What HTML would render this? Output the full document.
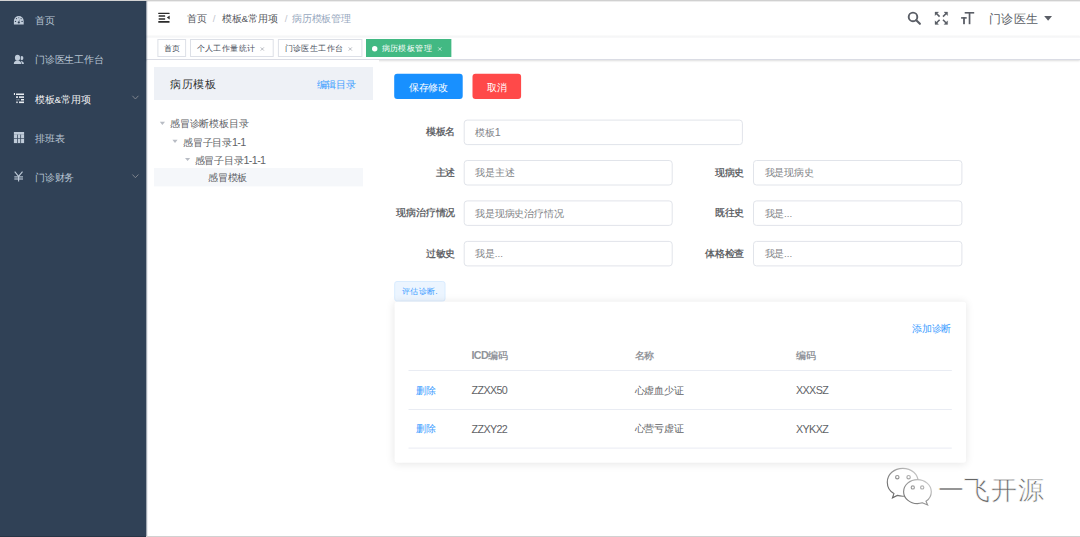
<!DOCTYPE html>
<html><head><meta charset="utf-8">
<style>
*{margin:0;padding:0;box-sizing:border-box}
html,body{width:1080px;height:537px;overflow:hidden;background:#fff;font-family:"Liberation Sans",sans-serif;position:relative}
.a{position:absolute;white-space:nowrap}
#topline{left:0;top:0;width:10800px;height:10px;background:#d3d3d3}
#botline{left:0;top:5360px;width:10800px;height:10px;background:rgba(0,0,0,.18)}
#side{left:0;top:10px;width:1460px;height:5360px;background:#304156}
.mi{left:350px;font-size:98px;color:#b9c5d3;line-height:120px}
.mic{left:140px}
.arr{left:1320px}
#nav{left:1460px;top:10px;width:9340px;height:350px;background:#fff;box-shadow:0 10px 30px rgba(0,21,41,.08)}
.bc{font-size:98px;line-height:120px;top:126px}
#tags{left:1460px;top:360px;width:9340px;height:240px;background:#fff;border-bottom:10px solid #dadce4;box-shadow:0 10px 20px 0 rgba(0,0,0,.12),0 0 20px 0 rgba(0,0,0,.04)}
.tg{top:390px;height:180px;border:10px solid #dde0e7;background:#fff;color:#495060;font-size:84px;line-height:160px;padding:0 0 0 56px}
.tg .x{display:inline-block;width:112px;text-align:center;font-size:60px;margin-left:20px;color:#8a8f99;vertical-align:top}
.tg.act{background:#42b983;border-color:#42b983;color:#fff}
.tg.act .x{color:#fff}
.dot{display:inline-block;width:56px;height:56px;border-radius:50%;background:#fff;margin-right:20px;vertical-align:0px}
#lph{left:1540px;top:670px;width:2190px;height:330px;background:#eef1f6}
.tn{font-size:98px;color:#606266;line-height:120px}
.car{width:0;height:0;border-left:27px solid transparent;border-right:27px solid transparent;border-top:34px solid #c0c4cc}
.btn{height:252px;border-radius:30px;color:#fff;font-size:98px;line-height:266px;text-align:center;top:738px}
.lbl{font-size:98px;font-weight:700;color:#606266;line-height:120px;text-align:right}
.inp{border:10px solid #e1e4ea;border-radius:35px;height:255px;background:#fff;font-size:98px;color:#818387;line-height:235px;padding-left:105px}
#etag{left:3942px;top:2810px;width:513px;height:206px;background:#ecf5ff;border:10px solid #d9ecff;border-radius:28px;color:#409eff;font-size:84px;line-height:186px;padding-left:65px}
#card{left:3947px;top:3018px;width:5713px;height:1608px;background:#fff;border-radius:28px;box-shadow:0 10px 80px 0 rgba(0,0,0,.1)}
.th{font-size:98px;color:#909399;font-weight:bold;line-height:120px;top:3496px}
.td{font-size:98px;color:#606266;line-height:120px}
.hl{left:4085px;width:5433px;height:10px;background:#e9ecf3}
.blue{color:#409eff}
.lt{font-size:1.1em;letter-spacing:-0.06em}
#wm{left:9375px;top:4752px;font-size:265px;color:#666;line-height:300px;letter-spacing:3px;-webkit-text-stroke:6px #fff}
#root{position:absolute;left:0;top:0;width:10800px;height:5370px;transform:scale(0.1);transform-origin:0 0}
</style></head><body><div id="root">
<div id="topline" class="a"></div>
<div id="side" class="a"></div>

<!-- sidebar items -->
<div class="a mi" style="top:144px">首页</div>
<div class="a mi" style="top:537px">门诊医生工作台</div>
<div class="a mi" style="top:931px;color:#f4f4f5">模板&amp;常用项</div>
<div class="a mi" style="top:1321px">排班表</div>
<div class="a mi" style="top:1714px">门诊财务</div>

<div id="nav" class="a"></div>
<div id="tags" class="a"></div>
<div class="a" style="left:1460px;top:362px;width:9340px;height:22px;background:linear-gradient(rgba(0,21,41,.05),rgba(0,21,41,.035) 50%,rgba(0,21,41,0))"></div>

<!-- breadcrumb -->
<div class="a bc" style="left:1870px;color:#55575c">首页</div>
<div class="a bc" style="left:2127px;color:#c0c4cc">/</div>
<div class="a bc" style="left:2220px;color:#55575c">模板&amp;常用项</div>
<div class="a bc" style="left:2847px;color:#c0c4cc">/</div>
<div class="a bc" style="left:2920px;color:#97a8be">病历模板管理</div>

<div class="a" style="left:9888px;top:107px;font-size:125px;line-height:150px;color:#5a5e66">门诊医生</div>

<!-- tags -->
<div class="a tg" style="left:1574px;width:287px">首页</div>
<div class="a tg" style="left:1900px;width:837px">个人工作量统计</div>
<div class="a tg" style="left:2779px;width:845px">门诊医生工作台</div>
<div class="a tg act" style="left:3660px;width:852px;padding-left:146px">病历模板管理</div>
<div class="a" style="left:3720px;top:460px;width:54px;height:54px;border-radius:50%;background:#fff"></div>
<div class="a" style="left:1470px;top:600px;width:2320px;height:40px;background:#fff"></div>
<!-- left panel -->
<div id="lph" class="a"></div>
<div class="a" style="left:1700px;top:770px;font-size:115px;line-height:140px;color:#303133">病历模板</div>
<div class="a blue" style="left:3165px;top:790px;font-size:98px;line-height:120px">编辑目录</div>

<div class="a tn" style="left:1700px;top:1180px">感冒诊断模板目录</div>
<div class="a tn" style="left:1830px;top:1360px">感冒子目录<span class="lt">1-1</span></div>
<div class="a tn" style="left:1945px;top:1540px">感冒子目录<span class="lt">1-1-1</span></div>
<div class="a" style="left:1540px;top:1680px;width:2090px;height:184px;background:#f5f7fa"></div>
<div class="a tn" style="left:2080px;top:1720px">感冒模板</div>

<!-- buttons -->
<div class="a btn" style="left:3942px;width:685px;background:#1890ff">保存修改</div>
<div class="a btn" style="left:4725px;width:486px;background:#ff4949">取消</div>

<!-- form -->
<div class="a lbl" style="left:3800px;width:752px;top:1260px">模板名</div>
<div class="a inp" style="left:4637px;top:1196px;width:2792px">模板<span class="lt">1</span></div>

<div class="a lbl" style="left:3800px;width:752px;top:1665px">主述</div>
<div class="a inp" style="left:4637px;top:1600px;width:2090px">我是主述</div>
<div class="a lbl" style="left:6700px;width:742px;top:1665px">现病史</div>
<div class="a inp" style="left:7530px;top:1600px;width:2094px">我是现病史</div>

<div class="a lbl" style="left:3800px;width:752px;top:2070px">现病治疗情况</div>
<div class="a inp" style="left:4637px;top:2004px;width:2090px">我是现病史治疗情况</div>
<div class="a lbl" style="left:6700px;width:742px;top:2070px">既往史</div>
<div class="a inp" style="left:7530px;top:2004px;width:2094px">我是...</div>

<div class="a lbl" style="left:3800px;width:752px;top:2475px">过敏史</div>
<div class="a inp" style="left:4637px;top:2409px;width:2090px">我是...</div>
<div class="a lbl" style="left:6700px;width:742px;top:2475px">体格检查</div>
<div class="a inp" style="left:7530px;top:2409px;width:2094px">我是...</div>

<div id="etag" class="a">评估诊断.</div>
<div id="card" class="a"></div>
<div class="a blue" style="left:9120px;top:3230px;font-size:98px;line-height:120px">添加诊断</div>
<div class="a th" style="left:4715px"><span class="lt">ICD</span>编码</div>
<div class="a th" style="left:6345px">名称</div>
<div class="a th" style="left:7960px">编码</div>
<div class="a hl" style="top:3700px"></div>
<div class="a td blue" style="left:4160px;top:3845px">删除</div>
<div class="a td" style="left:4715px;top:3845px"><span class="lt">ZZXX50</span></div>
<div class="a td" style="left:6345px;top:3845px">心虚血少证</div>
<div class="a td" style="left:7960px;top:3845px"><span class="lt">XXXSZ</span></div>
<div class="a hl" style="top:4090px"></div>
<div class="a td blue" style="left:4160px;top:4230px">删除</div>
<div class="a td" style="left:4715px;top:4230px"><span class="lt">ZZXY22</span></div>
<div class="a td" style="left:6345px;top:4230px">心营亏虚证</div>
<div class="a td" style="left:7960px;top:4230px"><span class="lt">XYKXZ</span></div>
<div class="a hl" style="top:4476px"></div>

<div id="wm" class="a">一飞开源</div>

<svg class="a" style="left:0;top:0" width="10800" height="5370" viewBox="0 0 1080 537">
<!-- hamburger -->
<g fill="#2b2b2b">
<rect x="158.2" y="12.7" width="11.4" height="1.4" rx="0.4"/>
<rect x="158.6" y="15.3" width="6.6" height="1.5" rx="0.4"/>
<rect x="158.6" y="18.2" width="6.6" height="1.5" rx="0.4"/>
<rect x="158.2" y="21" width="11.4" height="1.7" rx="0.4"/>
<path d="M169.7 15.4 L169.7 19.4 L166.8 17.4z"/>
</g>
<!-- search -->
<circle cx="913" cy="16.9" r="4.3" stroke="#5a5e66" stroke-width="1.9" fill="none"/>
<line x1="916.3" y1="20.2" x2="919.9" y2="23.8" stroke="#5a5e66" stroke-width="2.1" stroke-linecap="round"/>
<!-- fullscreen -->
<g fill="#5a5e66" stroke="#5a5e66">
<path d="M935 12 h3.6 l-3.6 3.6z" stroke-width="0.3"/><line x1="936.2" y1="13.2" x2="939.6" y2="16.6" stroke-width="1.6"/>
<path d="M947.6 12 h-3.6 l3.6 3.6z" stroke-width="0.3"/><line x1="946.4" y1="13.2" x2="943" y2="16.6" stroke-width="1.6"/>
<path d="M935 24.4 h3.6 l-3.6 -3.6z" stroke-width="0.3"/><line x1="936.2" y1="23.2" x2="939.6" y2="19.8" stroke-width="1.6"/>
<path d="M947.6 24.4 h-3.6 l3.6 -3.6z" stroke-width="0.3"/><line x1="946.4" y1="23.2" x2="943" y2="19.8" stroke-width="1.6"/>
</g>
<!-- size tT -->
<g fill="#5a5e66">
<rect x="964.7" y="12" width="9.5" height="1.6"/><rect x="968.7" y="12" width="1.7" height="12.2"/>
<rect x="961.1" y="17.1" width="5.6" height="1.6"/><rect x="963.1" y="17.1" width="1.8" height="7.1"/>
</g>
<!-- caret -->
<path d="M1044.2 16 L1052 16 L1048.1 20.8z" fill="#5a5e66"/>
<!-- sidebar icons -->
<g fill="#bfcbd9">
<path d="M13.9 24.5 V20.9 A4.9 4.9 0 0 1 23.7 20.9 V24.5z"/>
</g>
<g fill="#304156">
<circle cx="15.5" cy="21.4" r="0.7"/><circle cx="22.1" cy="21.4" r="0.7"/>
<circle cx="16.5" cy="18.6" r="0.6"/><circle cx="21.1" cy="18.6" r="0.6"/><circle cx="18.8" cy="17.7" r="0.5"/>
<circle cx="18.8" cy="22.5" r="1.1"/><path d="M18.4 22.3 L19.4 19 L19.2 22.5z"/>
</g>
<g fill="#bfcbd9">
<ellipse cx="21.8" cy="58.1" rx="1.6" ry="2.1"/>
<path d="M20.6 60.9 Q23.9 61.2 23.9 63.9 L21.2 63.9z"/>
</g>
<g fill="#304156" stroke="#304156" stroke-width="1.1">
<ellipse cx="17.5" cy="57.7" rx="2.6" ry="3"/>
<path d="M13.8 64.1 Q13.8 60.5 17.5 60.5 Q21.2 60.5 21.2 64.1z"/>
</g>
<g fill="#bfcbd9">
<ellipse cx="17.5" cy="57.7" rx="2.6" ry="3"/>
<path d="M13.8 64.1 Q13.8 60.5 17.5 60.5 Q21.2 60.5 21.2 64.1z"/>
</g>
<g fill="#e9edf2">
<rect x="13.9" y="93" width="1.1" height="2"/>
<rect x="16" y="93.5" width="8" height="1.5"/>
<rect x="16" y="96.3" width="2" height="1.6"/><rect x="19" y="96.3" width="5" height="1.6"/>
<rect x="16.5" y="99" width="1" height="1.5" opacity=".5"/><rect x="18.3" y="99" width="1" height="1.5" opacity=".5"/><rect x="21" y="99" width="3" height="1.5"/>
<rect x="16" y="101.5" width="2" height="1.6" opacity=".7"/><rect x="19" y="101.5" width="5" height="1.6"/>
</g>
<g fill="#bfcbd9">
<rect x="13.9" y="132" width="10.2" height="11.1"/>
</g>
<g fill="#304156" opacity=".9">
<rect x="17.05" y="134.6" width="0.8" height="8.6"/><rect x="20.25" y="134.6" width="0.8" height="8.6"/>
<rect x="13.9" y="138" width="10.2" height="0.7"/>
<rect x="13.9" y="134.2" width="10.2" height="0.35" opacity=".5"/>
</g>
<g stroke="#bfcbd9" stroke-width="1.1" fill="none">
<polyline points="14.7,171.7 18.6,176.4 22.5,171.7"/>
<line x1="18.6" y1="176.4" x2="18.6" y2="181.6"/>
<line x1="14.3" y1="176.9" x2="23" y2="176.9"/>
<line x1="14.3" y1="179" x2="23" y2="179"/>
</g>
<!-- submenu arrows -->
<polyline points="132.4,95.8 135.4,99 138.4,95.8" stroke="#909399" stroke-width="0.8" fill="none"/>
<polyline points="132.4,174.5 135.4,177.7 138.4,174.5" stroke="#909399" stroke-width="0.8" fill="none"/>
<!-- tag close -->
<g stroke="#9a9ea6" stroke-width="0.7">
<path d="M260.7 47.4 L263.9 50.6 M263.9 47.4 L260.7 50.6"/>
<path d="M348.7 47.4 L351.9 50.6 M351.9 47.4 L348.7 50.6"/>
</g>
<path d="M438.2 47.4 L441.4 50.6 M441.4 47.4 L438.2 50.6" stroke="#e8f6ef" stroke-width="0.7"/>
<!-- wechat -->
<defs><linearGradient id="wg" gradientUnits="userSpaceOnUse" x1="890" y1="505" x2="925" y2="467"><stop offset="0" stop-color="#555"/><stop offset=".55" stop-color="#9a9a9a"/><stop offset="1" stop-color="#e6e6e6"/></linearGradient></defs>
<g fill="#fff" stroke="url(#wg)" stroke-width="1.15">
<path d="M902.8 468.3 C911.5 468.3 918.3 474.3 918.3 482.2 C918.3 490.1 911.5 496.2 902.8 496.2 C900.8 496.2 899 495.9 897.3 495.4 L892.5 497.8 L893.9 493.6 C889.8 491.1 887.3 486.9 887.3 482.2 C887.3 474.3 894.1 468.3 902.8 468.3Z"/>
<circle cx="897.3" cy="477.2" r="1.7"/><circle cx="908.6" cy="477.2" r="1.7"/>
<path d="M917.4 479.6 C924.9 479.6 931.3 484.9 931.3 491.7 C931.3 495.6 929.3 499.1 926 501.3 L927.6 505 L922.4 502.8 C920.8 503.3 919.2 503.6 917.4 503.6 C909.9 503.6 903.6 498.3 903.6 491.7 C903.6 484.9 909.9 479.6 917.4 479.6Z"/>
<circle cx="912.8" cy="487.4" r="1.6"/><circle cx="922.2" cy="487.4" r="1.6"/>
</g>
<!-- tree carets -->
<g fill="#b8bcc4">
<path d="M159.8 121.8 L165 121.8 L162.4 125z"/>
<path d="M172.4 139.8 L177.6 139.8 L175 143z"/>
<path d="M185 157.9 L190.2 157.9 L187.6 161.1z"/>
</g>
</svg>
<div class="a" style="left:1460px;top:10px;width:10px;height:5350px;background:rgba(48,65,86,.45)"></div><div class="a" style="left:1470px;top:10px;width:10px;height:5350px;background:rgba(48,65,86,.1)"></div><div class="a" style="left:1460px;top:10px;width:9340px;height:10px;background:rgba(0,0,0,.07)"></div>
<div id="botline" class="a"></div>
</div></body></html>
